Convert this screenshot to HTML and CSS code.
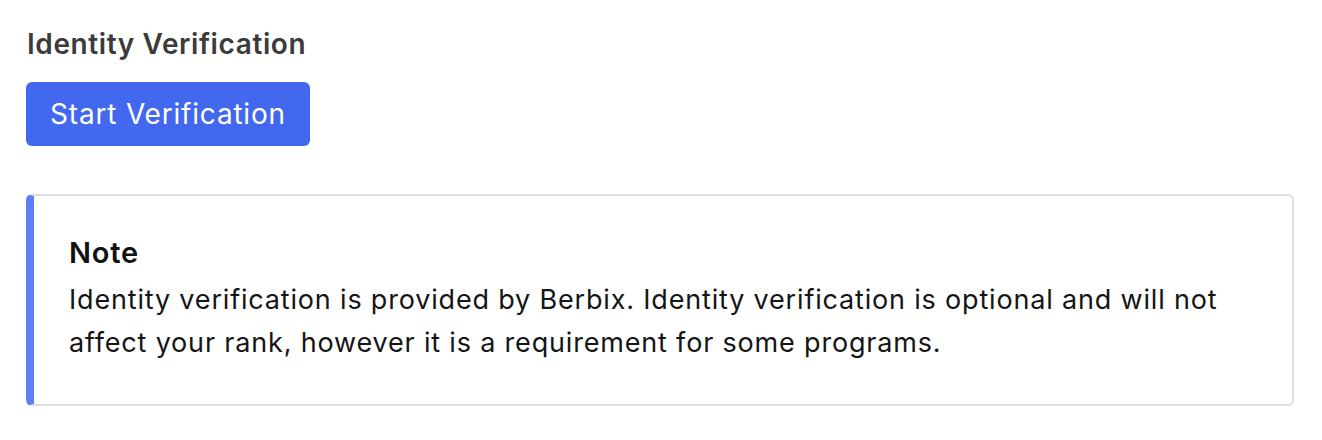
FILE: index.html
```html
<!DOCTYPE html>
<html>
<head>
<meta charset="utf-8">
<link rel="stylesheet" href="styles.css">
</head>
<body>
<main class="page">
  <h2 class="title">Identity Verification</h2>
  <button class="btn">Start Verification</button>
  <section class="note">
    <h3 class="note-title">Note</h3>
    <p class="note-text">Identity verification is provided by Berbix. Identity verification is optional and will not affect your rank, however it is a requirement for some programs.</p>
  </section>
</main>
</body>
</html>
```
FILE: styles.css
```css
html, body { margin: 0; padding: 0; background: #fff; }
body { font-family: "Inter", "Noto Sans", sans-serif; color: #151515; letter-spacing: 0.8px; }
.page { padding: 28px 28px 0 26px; display: flex; flex-direction: column; align-items: flex-start; }
.title { margin: 0 0 0 1px; font-size: 28px; font-weight: 600; color: #3b3b3b; line-height: 32px; letter-spacing: 0.6px; }
.btn { margin-top: 22px; height: 64px; width: 284px; background: #4168ee; color: #fff; border: none; border-radius: 6px; font-family: inherit; font-size: 28px; font-weight: 400; letter-spacing: 0.8px; padding: 0; }
.note { margin-top: 48px; box-sizing: border-box; width: 1268px; height: 212px; border: 2px solid #dedede; border-left: 8px solid #5a7ff6; border-radius: 6px; padding: 40px 62px 0 35px; }
.note-title { margin: 0; font-size: 29px; font-weight: 600; line-height: 34px; color: #111; }
.note-text { margin: 8px 0 0; font-size: 27px; line-height: 43px; color: #151515; letter-spacing: 0.82px; }
```
